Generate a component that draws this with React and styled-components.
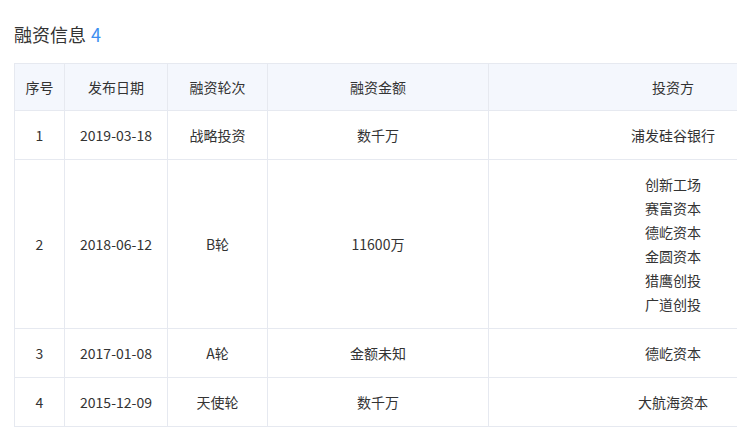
import React from "react";
import styled, { createGlobalStyle } from "styled-components";

const Global = createGlobalStyle`
  html, body { margin: 0; padding: 0; background: #fff; overflow: hidden; }
  body { font-family: "Noto Sans CJK SC", "Microsoft YaHei", sans-serif; color: #333; }
`;

const Page = styled.div`
  padding: 20px 0 0 14px;
  width: 900px;
`;

const Title = styled.h2`
  margin: 0 0 15px 0;
  font-size: 18px;
  font-weight: 400;
  line-height: 28px;
  color: #333;
`;

const Count = styled.span`
  color: #3d8ef0;
  margin-left: 5px;
`;

const Table = styled.table`
  border-collapse: collapse;
  table-layout: fixed;
  width: 843px;
  font-size: 14px;
  color: #333;
`;

const Th = styled.th`
  background: #f4f7fd;
  font-weight: 400;
  height: 46px;
  padding: 0;
  border: 1px solid #e6e9f0;
  text-align: center;
`;

const Td = styled.td`
  padding: 12px 0;
  line-height: 24px;
  border: 1px solid #e6e9f0;
  text-align: center;
  vertical-align: middle;
`;

const Line = styled.div`
  line-height: 24px;
`;

const rows = [
  ["1", "2019-03-18", "战略投资", "数千万", ["浦发硅谷银行"]],
  ["2", "2018-06-12", "B轮", "11600万", ["创新工场", "赛富资本", "德屹资本", "金圆资本", "猎鹰创投", "广道创投"]],
  ["3", "2017-01-08", "A轮", "金额未知", ["德屹资本"]],
  ["4", "2015-12-09", "天使轮", "数千万", ["大航海资本"]],
];

export default function App() {
  return (
    <Page>
      <Global />
      <Title>融资信息<Count>4</Count></Title>
      <Table>
        <colgroup>
          <col style={{ width: 50 }} />
          <col style={{ width: 103 }} />
          <col style={{ width: 100 }} />
          <col style={{ width: 221 }} />
          <col style={{ width: 369 }} />
        </colgroup>
        <thead>
          <tr>
            <Th>序号</Th>
            <Th>发布日期</Th>
            <Th>融资轮次</Th>
            <Th>融资金额</Th>
            <Th>投资方</Th>
          </tr>
        </thead>
        <tbody>
          {rows.map((r) => (
            <tr key={r[0]}>
              <Td>{r[0]}</Td>
              <Td>{r[1]}</Td>
              <Td>{r[2]}</Td>
              <Td>{r[3]}</Td>
              <Td>
                {r[4].map((n) => (
                  <Line key={n}>{n}</Line>
                ))}
              </Td>
            </tr>
          ))}
        </tbody>
      </Table>
    </Page>
  );
}
